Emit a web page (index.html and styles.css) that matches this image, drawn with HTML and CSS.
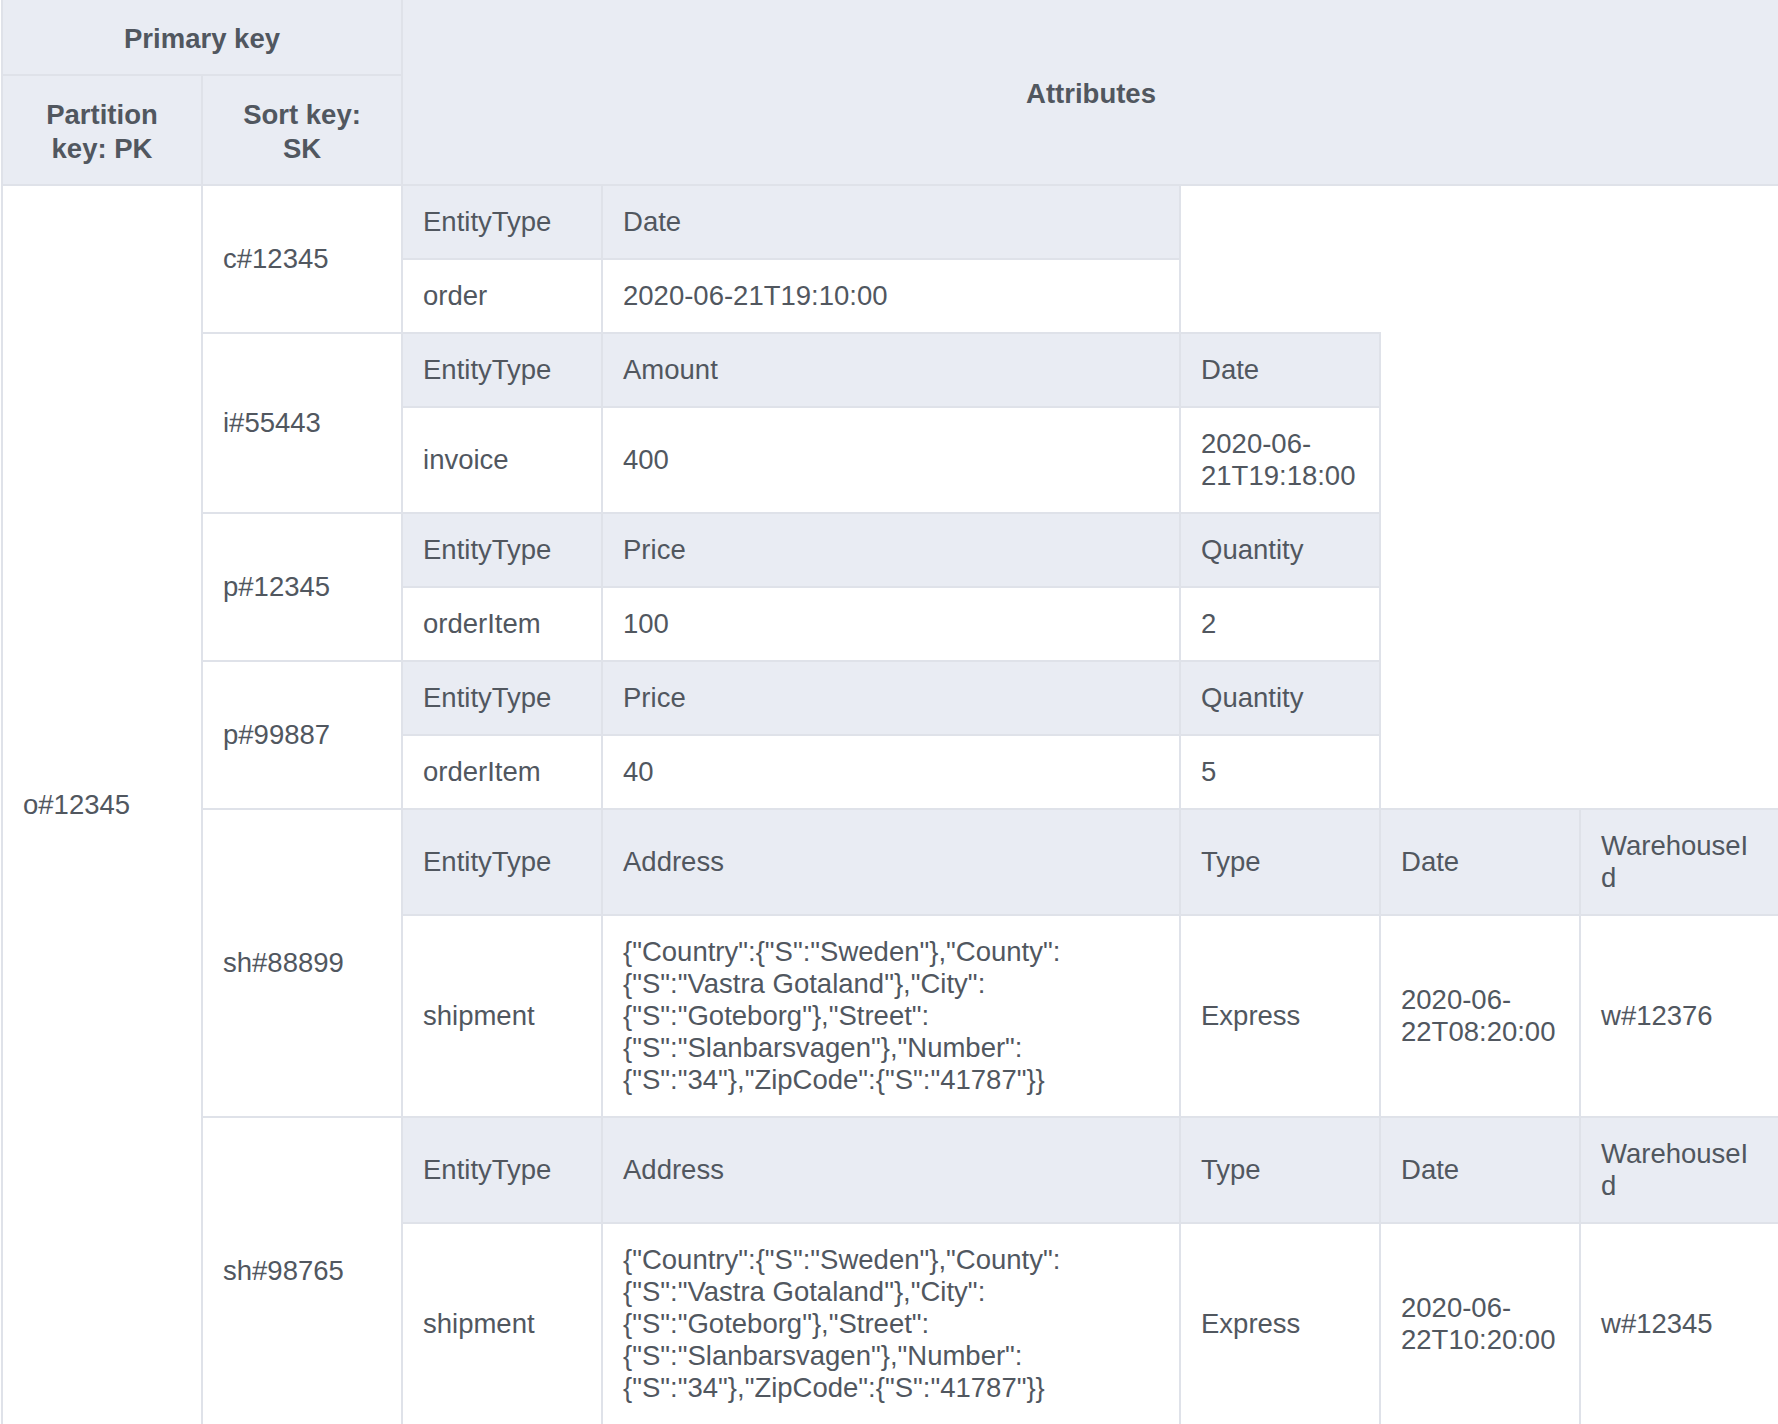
FILE: index.html
```html
<!DOCTYPE html>
<html lang="en">
<head>
<meta charset="utf-8">
<title>Primary key design</title>
<link rel="stylesheet" href="styles.css">
</head>
<body>
<table class="keys">
  <colgroup>
    <col class="col-pk">
    <col class="col-sk">
    <col class="col-std">
    <col class="col-wide">
    <col class="col-std">
    <col class="col-std">
    <col class="col-last">
  </colgroup>
  <thead>
    <tr>
      <th colspan="2" class="hd">Primary key</th>
      <th colspan="5" rowspan="2" class="hd">Attributes</th>
    </tr>
    <tr>
      <th class="hd">Partition key: PK</th>
      <th class="hd">Sort key: SK</th>
    </tr>
  </thead>
  <tbody>
    <tr>
      <td rowspan="12">o#12345</td>
      <td rowspan="2">c#12345</td>
      <td class="sub">EntityType</td>
      <td class="sub">Date</td>
    </tr>
    <tr>
      <td>order</td>
      <td>2020-06-21T19:10:00</td>
    </tr>
    <tr>
      <td rowspan="2">i#55443</td>
      <td class="sub">EntityType</td>
      <td class="sub">Amount</td>
      <td class="sub">Date</td>
    </tr>
    <tr>
      <td>invoice</td>
      <td>400</td>
      <td>2020-06-21T19:18:00</td>
    </tr>
    <tr>
      <td rowspan="2">p#12345</td>
      <td class="sub">EntityType</td>
      <td class="sub">Price</td>
      <td class="sub">Quantity</td>
    </tr>
    <tr>
      <td>orderItem</td>
      <td>100</td>
      <td>2</td>
    </tr>
    <tr>
      <td rowspan="2">p#99887</td>
      <td class="sub">EntityType</td>
      <td class="sub">Price</td>
      <td class="sub">Quantity</td>
    </tr>
    <tr>
      <td>orderItem</td>
      <td>40</td>
      <td>5</td>
    </tr>
    <tr>
      <td rowspan="2">sh#88899</td>
      <td class="sub">EntityType</td>
      <td class="sub">Address</td>
      <td class="sub">Type</td>
      <td class="sub">Date</td>
      <td class="sub">WarehouseId</td>
    </tr>
    <tr>
      <td>shipment</td>
      <td>{"Country":{"S":"Sweden"},"County":{"S":"Vastra Gotaland"},"City":{"S":"Goteborg"},"Street":{"S":"Slanbarsvagen"},"Number":{"S":"34"},"ZipCode":{"S":"41787"}}</td>
      <td>Express</td>
      <td>2020-06-22T08:20:00</td>
      <td>w#12376</td>
    </tr>
    <tr>
      <td rowspan="2">sh#98765</td>
      <td class="sub">EntityType</td>
      <td class="sub">Address</td>
      <td class="sub">Type</td>
      <td class="sub">Date</td>
      <td class="sub">WarehouseId</td>
    </tr>
    <tr>
      <td>shipment</td>
      <td>{"Country":{"S":"Sweden"},"County":{"S":"Vastra Gotaland"},"City":{"S":"Goteborg"},"Street":{"S":"Slanbarsvagen"},"Number":{"S":"34"},"ZipCode":{"S":"41787"}}</td>
      <td>Express</td>
      <td>2020-06-22T10:20:00</td>
      <td>w#12345</td>
    </tr>
  </tbody>
</table>
</body>
</html>
```

FILE: styles.css
```css
html, body {
  margin: 0;
  padding: 0;
  background: #ffffff;
}

body {
  font-family: "Liberation Sans", Arial, Helvetica, sans-serif;
  color: #51575f;
}

.keys {
  border-collapse: collapse;
  table-layout: fixed;
  width: 1780px;
  font-size: 27.5px;
  margin: -2px 0 0 1px;
}

.col-pk,
.col-sk,
.col-std {
  width: 200px;
}

.col-wide {
  width: 578px;
}

.col-last {
  width: 200px;
}

.keys th,
.keys td {
  border: 2px solid #dfe2e9;
  padding: 20px;
  line-height: 32px;
  vertical-align: middle;
  text-align: left;
  font-weight: normal;
  overflow-wrap: break-word;
  word-break: break-word;
}

.keys .hd {
  background: #e9ecf3;
  font-weight: bold;
  text-align: center;
  line-height: 34px;
  padding: 22px 20px 18px;
}

.keys .sub {
  background: #e9ecf3;
}
```
